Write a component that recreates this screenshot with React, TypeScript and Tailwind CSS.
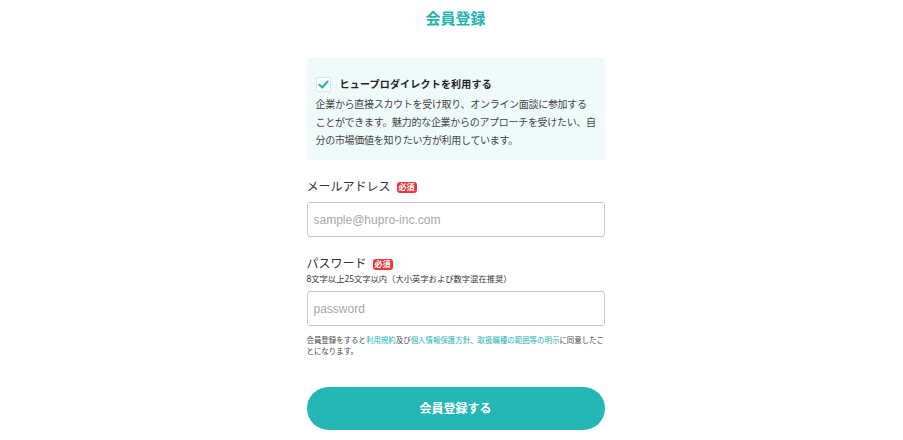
const Required = () => (
    <span className="ml-[6px] inline-flex h-[11px] w-[20px] items-center justify-center rounded-[3px] bg-[#e8383d] text-[8px] font-bold leading-none text-white">
        必須
    </span>
);

const App = () => {
    return (
        <div
            className="min-h-screen bg-white text-[#333]"
            style={{ fontFamily: '"Noto Sans", "Noto Sans CJK JP", sans-serif' }}
        >
            <div className="mx-auto flex w-[306px] flex-col pl-[8px] pt-[7px]">
                <h1 className="text-center text-[15px] font-bold leading-[22px] text-[#22b3b3]">会員登録</h1>

                {/* Direct option */}
                <div className="mt-[29px] bg-[#effafa] pl-[9px] pr-[4px] pt-[17px] pb-[11px]">
                    <label className="flex h-[18px] items-center gap-[9px]">
                        <span className="flex h-[15px] w-[15px] items-center justify-center rounded-[2px] border border-[#d8e6e6] bg-white">
                            <svg width="11" height="11" viewBox="0 0 12 12" fill="none">
                                <path d="M1.5 6.2 4.6 9.2 10.5 2.8" stroke="#22b3b3" strokeWidth="2.4" strokeLinecap="round" strokeLinejoin="round" />
                            </svg>
                        </span>
                        <span className="text-[10px] font-bold leading-[18px] tracking-[0.2px] text-[#222]">ヒュープロダイレクトを利用する</span>
                    </label>
                    <p className="mt-[2px] whitespace-nowrap text-[10px] leading-[18px] tracking-[-0.3px] text-[#444]">
                        企業から直接スカウトを受け取り、オンライン面談に参加する
                        <br />
                        ことができます。魅力的な企業からのアプローチを受けたい、自
                        <br />
                        分の市場価値を知りたい方が利用しています。
                    </p>
                </div>

                {/* Email */}
                <div className="mt-[18px] flex h-[18px] items-center">
                    <span className="text-[12px] leading-[18px] text-[#333]">メールアドレス</span>
                    <Required />
                </div>
                <input
                    type="email"
                    placeholder="sample@hupro-inc.com"
                    className="mt-[6px] h-[35px] w-full rounded-[3px] border border-[#c4c7cc] px-[6px] font-['Liberation_Sans',sans-serif] text-[12px] outline-none placeholder:text-[#a8a8a8]"
                />

                {/* Password */}
                <div className="mt-[18px] flex h-[18px] items-center">
                    <span className="text-[12px] leading-[18px] text-[#333]">パスワード</span>
                    <Required />
                </div>
                <p className="text-[8.3px] leading-[12px] text-[#333]">8文字以上25文字以内（大小英字および数字混在推奨）</p>
                <input
                    type="password"
                    placeholder="password"
                    className="mt-[6px] h-[35px] w-full rounded-[3px] border border-[#c4c7cc] px-[6px] font-['Liberation_Sans',sans-serif] text-[12px] outline-none placeholder:text-[#a8a8a8]"
                />

                <p className="mt-[9px] text-[7.45px] leading-[11px] text-[#444]">
                    会員登録をすると<a href="#" className="text-[#22b3b3]">利用規約</a>及び<a href="#" className="text-[#22b3b3]">個人情報保護方針</a>、<a href="#" className="text-[#22b3b3]">取扱職種の範囲等の明示</a>に同意したことになります。
                </p>

                <button className="mt-[30px] h-[43px] w-full rounded-full bg-[#25b7b5] text-[12px] font-bold text-white">
                    会員登録する
                </button>
            </div>
        </div>
    );
};

export default App;
